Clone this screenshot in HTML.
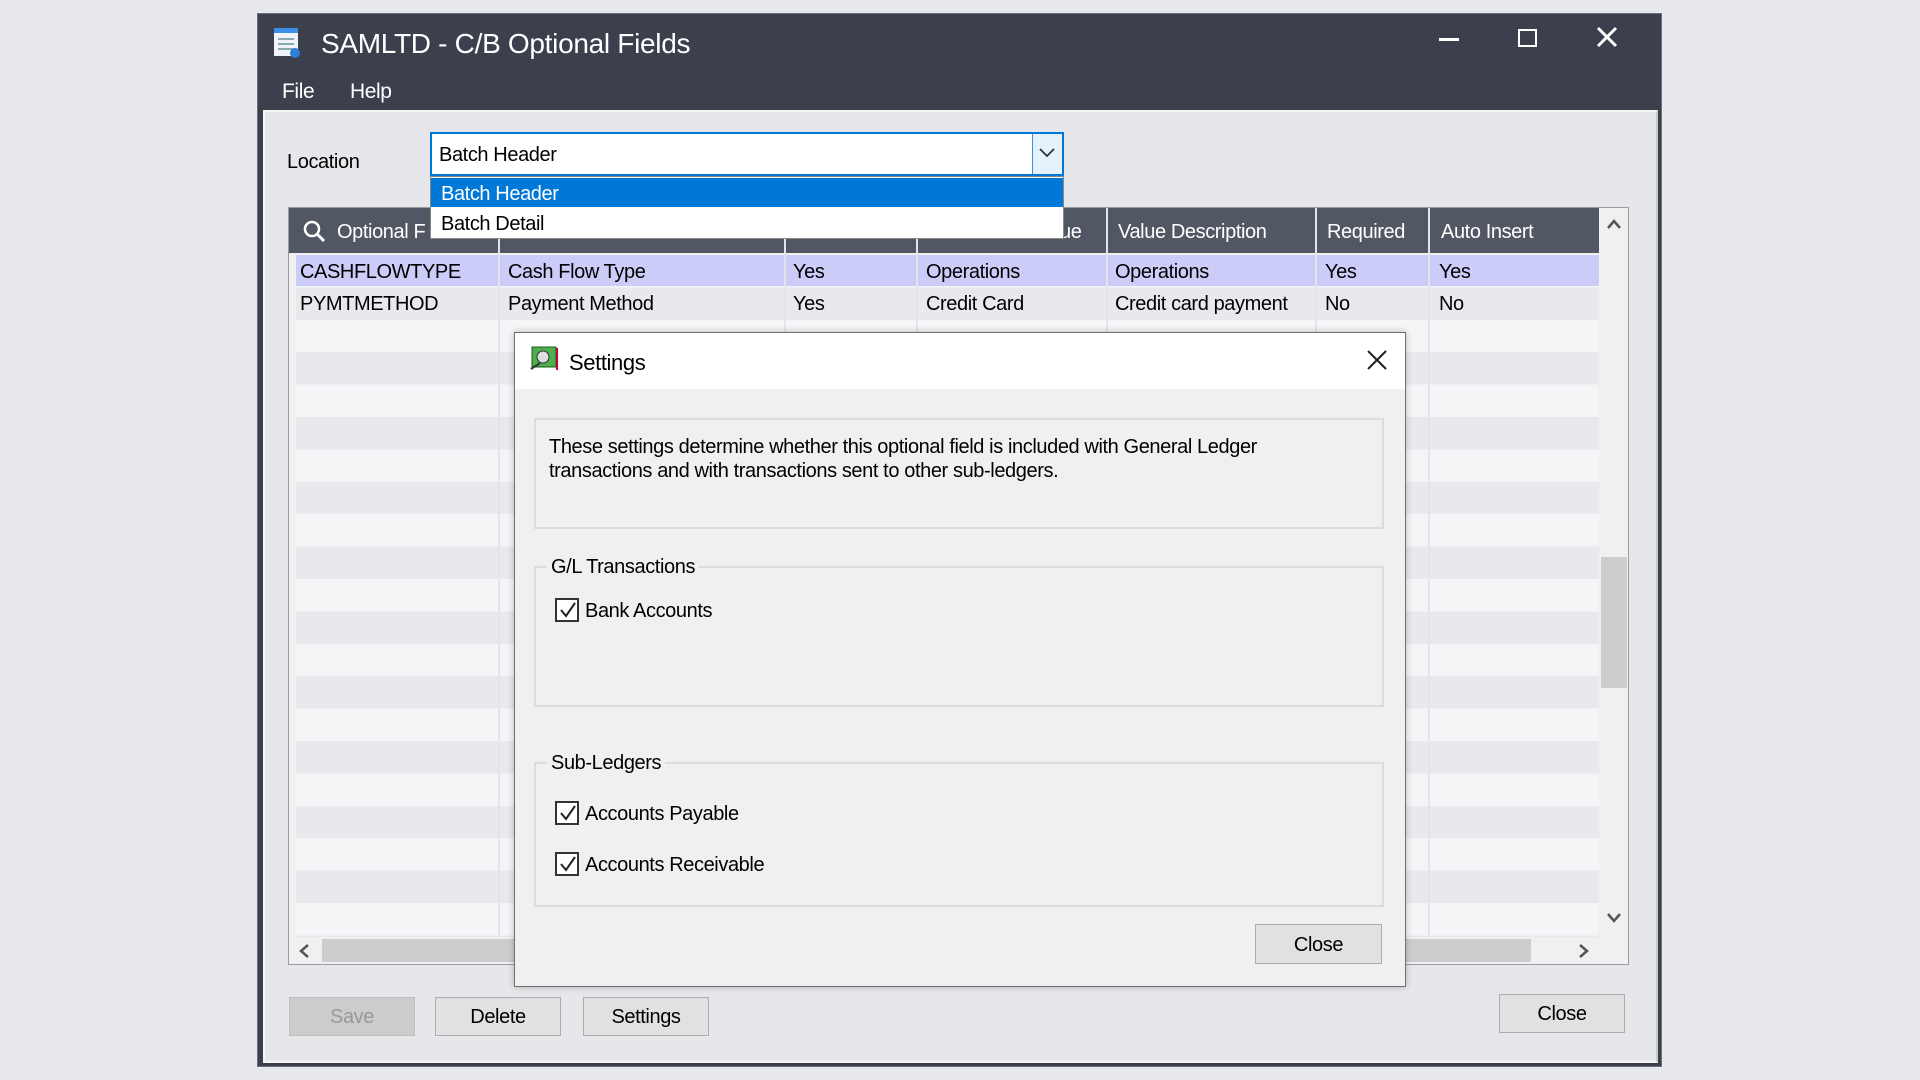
<!DOCTYPE html>
<html><head><meta charset="utf-8"><style>
*{margin:0;padding:0;box-sizing:border-box}
body{width:1920px;height:1080px;background:#e8e9ec;position:relative;overflow:hidden;font-family:"Liberation Sans",sans-serif;color:#000}
.a{position:absolute}
.t{position:absolute;white-space:nowrap;font-size:20px;letter-spacing:-0.4px;margin-top:2px}
.btn{position:absolute;background:#e1e1e1;border:1px solid #adadad;font-size:20px;text-align:center;letter-spacing:-0.4px}
.cb{position:absolute;width:24px;height:24px;border:2px solid #333;background:#fff}
</style></head><body>
<div class="a" style="left:257px;top:13px;width:1405px;height:1054px;background:#3b404c;border:1px solid #6b6f78"></div>
<div class="a" style="left:263px;top:110px;width:1395px;height:953px;background:#e6e7ea;border:2px solid #f6f6f7;border-right-color:#c9cacd"></div>
<div class="a" style="left:274px;top:28px;width:24px;height:28px;background:#f0f4fa;border-top:5px solid #3a8ee6"></div>
<div class="a" style="left:278px;top:38px;width:16px;height:2px;background:#8aa"></div>
<div class="a" style="left:278px;top:43px;width:16px;height:2px;background:#8aa"></div>
<div class="a" style="left:278px;top:48px;width:16px;height:2px;background:#8aa"></div>
<div class="a" style="left:290px;top:48px;width:10px;height:10px;border-radius:50%;background:#2a7fd8"></div>
<div class="t" style="left:321px;top:26px;font-size:28px;color:#fff;letter-spacing:-0.3px">SAMLTD - C/B Optional Fields</div>
<div class="t" style="left:282px;top:78px;font-size:21px;color:#fff">File</div>
<div class="t" style="left:350px;top:78px;font-size:21px;color:#fff">Help</div>
<div class="a" style="left:1439px;top:38px;width:20px;height:3px;background:#fff"></div>
<div class="a" style="left:1518px;top:29px;width:19px;height:18px;border:2px solid #fff"></div>
<svg class="a" style="left:1596px;top:26px" width="22" height="22"><path d="M2 2L20 20M20 2L2 20" stroke="#fff" stroke-width="3"/></svg>
<div class="t" style="left:287px;top:149px">Location</div>
<div class="a" style="left:288px;top:207px;width:1341px;height:758px;background:#f0f0f0;border:1px solid #9a9ca2"></div>
<div class="a" style="left:289px;top:208px;width:1310px;height:45px;background:#525764"></div>
<div class="a" style="left:296px;top:255px;width:1303px;height:682px;background:repeating-linear-gradient(#f4f5f7 0 32.4px,#e8e9ed 32.4px 64.8px)"></div>
<div class="a" style="left:296px;top:255px;width:1303px;height:31px;background:#ccccf8"></div>
<div class="a" style="left:498px;top:208px;width:2px;height:729px;background:#e4e5e8"></div>
<div class="a" style="left:784px;top:208px;width:2px;height:729px;background:#e4e5e8"></div>
<div class="a" style="left:916px;top:208px;width:2px;height:729px;background:#e4e5e8"></div>
<div class="a" style="left:1106px;top:208px;width:2px;height:729px;background:#e4e5e8"></div>
<div class="a" style="left:1315px;top:208px;width:2px;height:729px;background:#e4e5e8"></div>
<div class="a" style="left:1428px;top:208px;width:2px;height:729px;background:#e4e5e8"></div>
<svg class="a" style="left:302px;top:219px" width="24" height="24"><circle cx="10" cy="10" r="7" fill="none" stroke="#fff" stroke-width="2.5"/><path d="M15 15L22 22" stroke="#fff" stroke-width="3"/></svg>
<div class="t" style="left:337px;top:219px;color:#fff">Optional F</div>
<div class="t" style="left:1060px;top:219px;color:#fff">ue</div>
<div class="t" style="left:1118px;top:219px;color:#fff">Value Description</div>
<div class="t" style="left:1327px;top:219px;color:#fff">Required</div>
<div class="t" style="left:1441px;top:219px;color:#fff">Auto Insert</div>
<div class="t" style="left:300px;top:259px">CASHFLOWTYPE</div>
<div class="t" style="left:508px;top:259px">Cash Flow Type</div>
<div class="t" style="left:793px;top:259px">Yes</div>
<div class="t" style="left:926px;top:259px">Operations</div>
<div class="t" style="left:1115px;top:259px">Operations</div>
<div class="t" style="left:1325px;top:259px">Yes</div>
<div class="t" style="left:1439px;top:259px">Yes</div>
<div class="t" style="left:300px;top:291px">PYMTMETHOD</div>
<div class="t" style="left:508px;top:291px">Payment Method</div>
<div class="t" style="left:793px;top:291px">Yes</div>
<div class="t" style="left:926px;top:291px">Credit Card</div>
<div class="t" style="left:1115px;top:291px">Credit card payment</div>
<div class="t" style="left:1325px;top:291px">No</div>
<div class="t" style="left:1439px;top:291px">No</div>
<div class="a" style="left:1600px;top:208px;width:28px;height:729px;background:#f0f0f0"></div>
<div class="a" style="left:1601px;top:557px;width:26px;height:131px;background:#cdcdcd"></div>
<svg class="a" style="left:1606px;top:218px" width="16" height="12"><path d="M2 10L8 3L14 10" fill="none" stroke="#555" stroke-width="2.5"/></svg>
<svg class="a" style="left:1606px;top:912px" width="16" height="12"><path d="M2 2L8 9L14 2" fill="none" stroke="#555" stroke-width="2.5"/></svg>
<div class="a" style="left:289px;top:937px;width:1311px;height:27px;background:#f0f0f0"></div>
<div class="a" style="left:322px;top:939px;width:1209px;height:23px;background:#cdcdcd"></div>
<svg class="a" style="left:298px;top:943px" width="12" height="16"><path d="M10 2L3 8L10 14" fill="none" stroke="#555" stroke-width="2.5"/></svg>
<svg class="a" style="left:1578px;top:943px" width="12" height="16"><path d="M2 2L9 8L2 14" fill="none" stroke="#555" stroke-width="2.5"/></svg>
<div class="a" style="left:430px;top:132px;width:634px;height:44px;background:#fff;border:2px solid #0078d7"></div>
<div class="a" style="left:1032px;top:134px;width:30px;height:40px;background:#e5f1fb;border-left:1px solid #3c8fd8"></div>
<svg class="a" style="left:1038px;top:147px" width="18" height="12"><path d="M2 2L9 9L16 2" fill="none" stroke="#333" stroke-width="1.8"/></svg>
<div class="t" style="left:439px;top:142px">Batch Header</div>
<div class="a" style="left:430px;top:176px;width:634px;height:63px;background:#fff;border:1px solid #888"></div>
<div class="a" style="left:431px;top:178px;width:632px;height:29px;background:#0078d7"></div>
<div class="t" style="left:441px;top:181px;color:#fff">Batch Header</div>
<div class="t" style="left:441px;top:211px">Batch Detail</div>
<div class="btn" style="left:289px;top:997px;width:126px;height:39px;line-height:39px;color:#999;background:#ccc;border-color:#bfbfbf">Save</div>
<div class="btn" style="left:435px;top:997px;width:126px;height:39px;line-height:39px">Delete</div>
<div class="btn" style="left:583px;top:997px;width:126px;height:39px;line-height:39px">Settings</div>
<div class="btn" style="left:1499px;top:994px;width:126px;height:39px;line-height:39px">Close</div>
<div class="a" style="left:514px;top:332px;width:892px;height:655px;background:#f0f0f0;border:1px solid #707070;box-shadow:0 0 6px rgba(0,0,0,.25)"></div>
<div class="a" style="left:515px;top:333px;width:890px;height:56px;background:#fff"></div>
<svg class="a" style="left:530px;top:345px" width="30" height="28"><rect x="2" y="2" width="24" height="20" fill="#4caf50" stroke="#1a5e1a"/><circle cx="13" cy="12" r="6" fill="#ddd" stroke="#333"/><path d="M1 24L10 18" stroke="#333" stroke-width="2"/><rect x="26" y="3" width="2" height="22" fill="#c03"/></svg>
<div class="t" style="left:569px;top:348px;font-size:22px">Settings</div>
<svg class="a" style="left:1366px;top:349px" width="22" height="22"><path d="M2 2L20 20M20 2L2 20" stroke="#222" stroke-width="2"/></svg>
<div class="a" style="left:534px;top:418px;width:850px;height:111px;border:2px solid #dcdcdc"></div>
<div class="t" style="left:549px;top:433px;line-height:24px">These settings determine whether this optional field is included with General Ledger<br>transactions and with transactions sent to other sub-ledgers.</div>
<div class="a" style="left:534px;top:566px;width:850px;height:141px;border:2px solid #dcdcdc"></div>
<div class="t" style="left:547px;top:554px;background:#f0f0f0;padding:0 4px">G/L Transactions</div>
<div class="cb" style="left:555px;top:598px"></div>
<svg class="a" style="left:559px;top:601px" width="18" height="18"><path d="M2 9L7 15L16 2" fill="none" stroke="#222" stroke-width="2"/></svg>
<div class="t" style="left:585px;top:598px">Bank Accounts</div>
<div class="a" style="left:534px;top:762px;width:850px;height:145px;border:2px solid #dcdcdc"></div>
<div class="t" style="left:547px;top:750px;background:#f0f0f0;padding:0 4px">Sub-Ledgers</div>
<div class="cb" style="left:555px;top:801px"></div>
<svg class="a" style="left:559px;top:804px" width="18" height="18"><path d="M2 9L7 15L16 2" fill="none" stroke="#222" stroke-width="2"/></svg>
<div class="t" style="left:585px;top:801px">Accounts Payable</div>
<div class="cb" style="left:555px;top:852px"></div>
<svg class="a" style="left:559px;top:855px" width="18" height="18"><path d="M2 9L7 15L16 2" fill="none" stroke="#222" stroke-width="2"/></svg>
<div class="t" style="left:585px;top:852px">Accounts Receivable</div>
<div class="btn" style="left:1255px;top:924px;width:127px;height:40px;line-height:40px">Close</div>
</body></html>
